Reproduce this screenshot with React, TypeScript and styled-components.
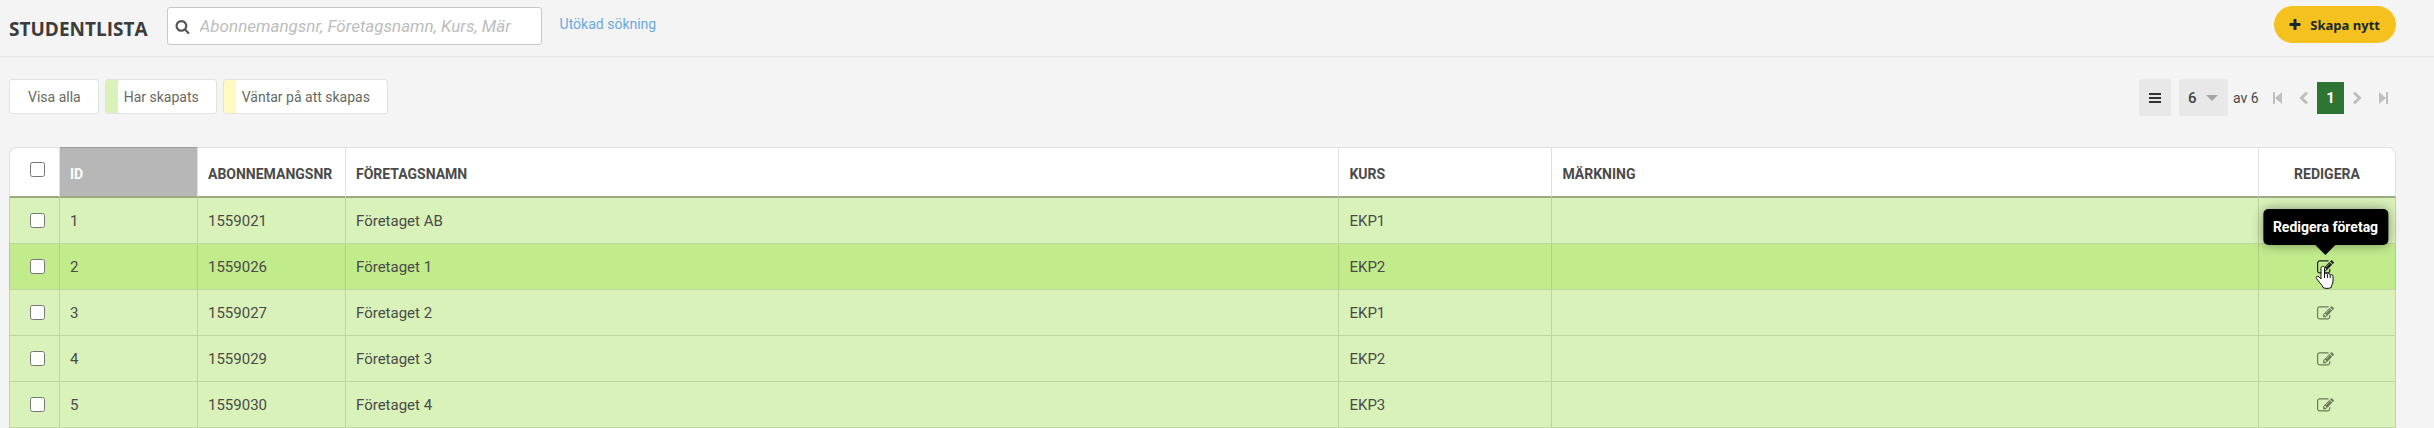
import React from "react";
import styled, { createGlobalStyle } from "styled-components";

const GlobalStyle = createGlobalStyle`
  *, *::before, *::after { box-sizing: border-box; }
  body {
    margin: 0;
    background: #f4f4f4;
    color: #4a4a4a;
    font-family: Roboto, "Liberation Sans", sans-serif;
    font-size: 15px;
  }
  button, input, select { font: inherit; color: inherit; }
`;

const Header = styled.header`
  display: flex;
  align-items: flex-start;
  height: 57px;
  padding: 6px 38px 0 9px;
  border-bottom: 1px solid #e5e5e5;
`;

const Title = styled.h1`
  margin: 10px 19px 0 0;
  color: #3c3c3b;
  font-family: "Open Sans", sans-serif;
  font-size: 19px;
  font-weight: 700;
  line-height: 26px;
`;

const SearchBox = styled.label`
  display: flex;
  align-items: center;
  gap: 10px;
  width: 375px;
  height: 38px;
  margin-top: 1px;
  padding: 0 30px 0 7px;
  border: 1px solid #c8c8c8;
  border-radius: 3px;
  background: #fff;
  color: #555;
`;

const SearchInput = styled.input`
  flex: 1;
  min-width: 0;
  padding: 0;
  border: 0;
  outline: 0;
  background: none;
  font-size: 17px;
  text-overflow: clip;
  &::placeholder { color: #bdbdbd; font-style: italic; opacity: 1; }
`;

const AdvancedLink = styled.a`
  margin: 8px 0 0 18px;
  color: #6aa9e0;
  font-size: 14px;
  line-height: 20px;
  text-decoration: none;
`;

const CreateButton = styled.button`
  display: flex;
  align-items: center;
  gap: 8px;
  height: 37px;
  margin-left: auto;
  padding: 0 16px 0 14px;
  border: 0;
  border-radius: 19px;
  background: #f5c11e;
  color: #13292b;
  font-family: "Open Sans", sans-serif;
  font-size: 13px;
  font-weight: 700;
`;

const Toolbar = styled.div`
  display: flex;
  justify-content: space-between;
  padding: 22px 38px 0 9px;
`;

const Filters = styled.div`
  display: flex;
  gap: 6px;
`;

const FilterButton = styled.button<{ $stripe?: string }>`
  height: 35px;
  padding: 0 17px 0 18px;
  border: 1px solid #e2e2e2;
  border-radius: 3px;
  background: #fff;
  box-shadow: ${(p) => (p.$stripe ? `inset 12px 0 ${p.$stripe}` : "none")};
  color: #66695f;
  font-size: 14px;
`;

const Pager = styled.nav`
  display: flex;
  align-items: center;
  height: 37px;
`;

const MenuButton = styled.button`
  display: grid;
  place-items: center;
  width: 32px;
  height: 37px;
  margin-right: 8px;
  padding: 0;
  border: 0;
  border-radius: 2px;
  background: #e8e8e8;
  color: #333;
`;

const SizeField = styled.label`
  display: grid;
  align-items: center;
  margin-right: 5px;
  > * { grid-area: 1 / 1; }
  > svg { justify-self: end; margin-right: 10px; pointer-events: none; }
`;

const SizeSelect = styled.select`
  appearance: none;
  width: 49px;
  height: 37px;
  padding: 0 0 0 9px;
  border: 0;
  border-radius: 2px;
  background: #e8e8e8;
  color: #444;
  font-weight: 500;
`;

const Total = styled.span`
  width: 32px;
  font-size: 14px;
`;

const StepButton = styled.button`
  display: grid;
  place-items: center;
  width: 26px;
  height: 32px;
  padding: 0;
  border: 0;
  background: none;
  color: #bfbfbf;
`;

const PageButton = styled.button`
  width: 27px;
  height: 32px;
  padding: 0;
  border: 0;
  background: #2e7432;
  color: #fff;
  font-weight: 700;
`;

const TableArea = styled.main`
  padding: 31px 38px 0 9px;
`;

const Table = styled.table`
  width: 100%;
  table-layout: fixed;
  border-collapse: separate;
  border-spacing: 0;
`;

const HeadCell = styled.th<{ $active?: boolean; $center?: boolean }>`
  height: 51px;
  padding: ${(p) => (p.$center ? "4px 0 0" : "4px 0 0 10px")};
  border-top: 1px solid ${(p) => (p.$active ? "#9d9d9d" : "#e0e0e0")};
  border-right: 1px solid #e0e0e0;
  border-bottom: 2px solid #9aab7f;
  background: ${(p) => (p.$active ? "#b7b7b7" : "#fff")};
  color: ${(p) => (p.$active ? "#fff" : "#4a4a4a")};
  font-size: 14px;
  font-weight: 700;
  text-align: ${(p) => (p.$center ? "center" : "left")};
  text-transform: uppercase;
  white-space: nowrap;
  &:first-child { border-left: 1px solid #e0e0e0; border-top-left-radius: 8px; }
  &:last-child { border-top-right-radius: 8px; }
`;

const Row = styled.tr<{ $hover?: boolean }>`
  background: ${(p) => (p.$hover ? "#c2eb8c" : "#d9f2b9")};
  --line: ${(p) => (p.$hover ? "#aed17f" : "#bdd6a0")};
`;

const Cell = styled.td<{ $center?: boolean }>`
  height: 46px;
  padding: ${(p) => (p.$center ? "0 3px 0 0" : "0 10px")};
  border-right: 1px solid var(--line);
  border-bottom: 1px solid #bdd6a0;
  text-align: ${(p) => (p.$center ? "center" : "left")};
  &:first-child { border-left: 1px solid var(--line); }
`;

const Check = styled.input`
  display: block;
  width: 15px;
  height: 15px;
  margin: 0 0 0 20px;
`;

const HeadCheck = styled(Check)`
  margin: 0 0 10px 10px;
`;

const EditButton = styled.button`
  position: relative;
  display: inline-grid;
  place-items: center;
  padding: 0;
  border: 0;
  background: none;
  color: #6c7a5c;
  vertical-align: middle;
`;

const ActiveEditButton = styled(EditButton)`
  color: #222;
`;

const Tooltip = styled.span`
  position: absolute;
  bottom: 31px;
  left: 50%;
  transform: translateX(-50%);
  padding: 8px 10px;
  border-radius: 5px;
  background: #000;
  box-shadow: 0 0 12px rgba(0, 0, 0, 0.4);
  color: #fff;
  font-size: 14px;
  font-weight: 700;
  line-height: 20px;
  white-space: nowrap;
  &::after {
    content: "";
    position: absolute;
    top: 100%;
    left: 50%;
    margin-left: -10px;
    border: 10px solid transparent;
    border-top-color: #000;
    border-bottom: 0;
  }
`;

const Pointer = styled.svg`
  position: absolute;
  top: 6px;
  left: -2px;
`;

type IconProps = { size: number; d: string };

const Icon = ({ size, d }: IconProps) => (
  <svg width={size} height={size} viewBox="0 0 1792 1792" fill="currentColor" aria-hidden="true">
    <path d={d} />
  </svg>
);

const SEARCH =
  "M1216 832q0-185-131.5-316.5t-316.5-131.5-316.5 131.5-131.5 316.5 131.5 316.5 316.5 131.5 316.5-131.5 131.5-316.5zm512 832q0 52-38 90t-90 38q-54 0-90-38l-343-342q-179 124-399 124-143 0-273.5-55.5t-225-150-150-225-55.5-273.5 55.5-273.5 150-225 225-150 273.5-55.5 273.5 55.5 225 150 150 225 55.5 273.5q0 220-124 399l343 343q37 37 37 90z";
const PLUS =
  "M1600 736v192q0 40-28 68t-68 28h-416v416q0 40-28 68t-68 28h-192q-40 0-68-28t-28-68v-416h-416q-40 0-68-28t-28-68v-192q0-40 28-68t68-28h416v-416q0-40 28-68t68-28h192q40 0 68 28t28 68v416h416q40 0 68 28t28 68z";
const EDIT =
  "M888 1184l116-116-152-152-116 116v56h96v96h56zm440-720q-16-16-33 1l-350 350q-17 17-1 33t33-1l350-350q17-17 1-33zm80 594v190q0 119-84.5 203.5t-203.5 84.5h-832q-119 0-203.5-84.5t-84.5-203.5v-832q0-119 84.5-203.5t203.5-84.5h832q63 0 117 25 15 7 18 23 3 17-9 29l-49 49q-14 14-32 8-23-6-45-6h-832q-66 0-113 47t-47 113v832q0 66 47 113t113 47h832q66 0 113-47t47-113v-126q0-13 9-22l64-64q15-15 35-7t20 29zm-96-738l288 288-672 672h-288v-288zm444 132l-92 92-288-288 92-92q28-28 68-28t68 28l152 152q28 28 28 68t-28 68z";

const StepIcon = ({ kind, flip }: { kind: "end" | "step"; flip?: boolean }) => (
  <svg width="10" height="14" viewBox="0 0 10 14" aria-hidden="true">
    <g transform={flip ? "translate(10 0) scale(-1 1)" : undefined}>
      {kind === "end" ? (
        <path d="M0 1h2v12H0zM9 1v12L2 7z" fill="currentColor" />
      ) : (
        <path d="M8 1.5 2.5 7 8 12.5" fill="none" stroke="currentColor" strokeWidth="3" />
      )}
    </g>
  </svg>
);

const HandPointer = () => (
  <Pointer width="19" height="24" viewBox="0 0 19 24" aria-hidden="true">
    <path
      d="M6 14V3.2C6 .6 9.5.6 9.5 3.2V9c.3-1.5 2.8-1.3 2.9.4.5-1.2 2.7-.9 2.8.8.7-1.1 2.8-.7 2.8 1.2V16c0 3-1.5 4-1.8 6.5-2 1.2-6.5 1.2-8.2 0C7.5 20.5 4 17 1.5 13.5c-1-1.8.9-3 2.5-1.6z"
      fill="#fff"
      stroke="#111"
      strokeWidth="1"
      strokeLinejoin="round"
    />
    <path d="M9.5 9v4M12.4 9.5V13M15.2 10.2V13" stroke="#111" strokeWidth="1" />
  </Pointer>
);

const rows = [
  { id: 1, number: "1559021", name: "Företaget AB", course: "EKP1" },
  { id: 2, number: "1559026", name: "Företaget 1", course: "EKP2" },
  { id: 3, number: "1559027", name: "Företaget 2", course: "EKP1" },
  { id: 4, number: "1559029", name: "Företaget 3", course: "EKP2" },
  { id: 5, number: "1559030", name: "Företaget 4", course: "EKP3" },
];

const hoveredId = 2;

export default function App() {
  return (
    <>
      <GlobalStyle />
      <Header>
        <Title>STUDENTLISTA</Title>
        <SearchBox>
          <Icon size={15} d={SEARCH} />
          <SearchInput
            type="text"
            aria-label="Sök"
            placeholder="Abonnemangsnr, Företagsnamn, Kurs, Märkning"
          />
        </SearchBox>
        <AdvancedLink href="#sok">Utökad sökning</AdvancedLink>
        <CreateButton type="button">
          <Icon size={14} d={PLUS} />
          Skapa nytt
        </CreateButton>
      </Header>

      <Toolbar>
        <Filters>
          <FilterButton type="button">Visa alla</FilterButton>
          <FilterButton type="button" $stripe="#d9f2b9">Har skapats</FilterButton>
          <FilterButton type="button" $stripe="#fffac0">Väntar på att skapas</FilterButton>
        </Filters>
        <Pager aria-label="Sidor">
          <MenuButton type="button" aria-label="Meny">
            <svg width="12" height="10" viewBox="0 0 12 10" fill="currentColor" aria-hidden="true">
              <path d="M0 0h12v2H0zM0 4h12v2H0zM0 8h12v2H0z" />
            </svg>
          </MenuButton>
          <SizeField>
            <SizeSelect aria-label="Rader per sida" defaultValue="6">
              <option>6</option>
            </SizeSelect>
            <svg width="12" height="6" viewBox="0 0 12 6" aria-hidden="true">
              <path d="M0 0h12L6 6z" fill="#a5a5a5" />
            </svg>
          </SizeField>
          <Total>av 6</Total>
          <StepButton type="button" aria-label="Första sidan"><StepIcon kind="end" /></StepButton>
          <StepButton type="button" aria-label="Föregående sida"><StepIcon kind="step" /></StepButton>
          <PageButton type="button" aria-current="page">1</PageButton>
          <StepButton type="button" aria-label="Nästa sida"><StepIcon kind="step" flip /></StepButton>
          <StepButton type="button" aria-label="Sista sidan"><StepIcon kind="end" flip /></StepButton>
        </Pager>
      </Toolbar>

      <TableArea>
        <Table>
          <colgroup>
            <col style={{ width: 51 }} />
            <col style={{ width: 138 }} />
            <col style={{ width: 148 }} />
            <col />
            <col style={{ width: 213 }} />
            <col style={{ width: "29.6%" }} />
            <col style={{ width: 137 }} />
          </colgroup>
          <thead>
            <tr>
              <HeadCell scope="col"><HeadCheck type="checkbox" aria-label="Markera alla" /></HeadCell>
              <HeadCell scope="col" $active>ID</HeadCell>
              <HeadCell scope="col">Abonnemangsnr</HeadCell>
              <HeadCell scope="col">Företagsnamn</HeadCell>
              <HeadCell scope="col">Kurs</HeadCell>
              <HeadCell scope="col">Märkning</HeadCell>
              <HeadCell scope="col" $center>Redigera</HeadCell>
            </tr>
          </thead>
          <tbody>
            {rows.map((row) => (
              <Row key={row.id} $hover={row.id === hoveredId}>
                <Cell $center><Check type="checkbox" aria-label={`Markera ${row.name}`} /></Cell>
                <Cell>{row.id}</Cell>
                <Cell>{row.number}</Cell>
                <Cell>{row.name}</Cell>
                <Cell>{row.course}</Cell>
                <Cell />
                <Cell $center>
                  {row.id === hoveredId ? (
                    <ActiveEditButton type="button">
                      <Icon size={17} d={EDIT} />
                      <Tooltip>Redigera företag</Tooltip>
                      <HandPointer />
                    </ActiveEditButton>
                  ) : (
                    <EditButton type="button" aria-label={`Redigera ${row.name}`}>
                      <Icon size={17} d={EDIT} />
                    </EditButton>
                  )}
                </Cell>
              </Row>
            ))}
          </tbody>
        </Table>
      </TableArea>
    </>
  );
}
